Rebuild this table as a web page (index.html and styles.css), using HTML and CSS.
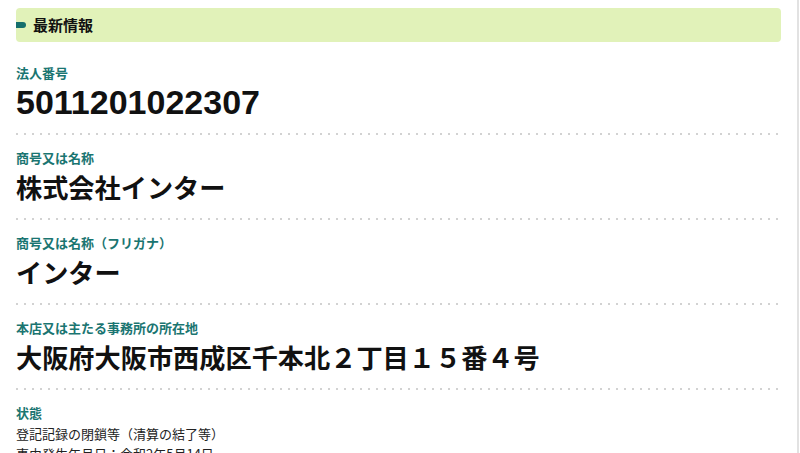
FILE: index.html
```html
<!DOCTYPE html>
<html lang="ja">
<head>
<meta charset="utf-8">
<title>最新情報</title>
<link rel="stylesheet" href="styles.css">
</head>
<body>
<div class="page">
  <h2 class="heading"><span class="heading-mark"></span>最新情報</h2>
  <dl class="info">
    <div class="row">
      <dt class="label">法人番号</dt>
      <dd class="value value-num">5011201022307</dd>
    </div>
    <div class="row">
      <dt class="label">商号又は名称</dt>
      <dd class="value">株式会社インター</dd>
    </div>
    <div class="row">
      <dt class="label">商号又は名称（フリガナ）</dt>
      <dd class="value">インター</dd>
    </div>
    <div class="row">
      <dt class="label">本店又は主たる事務所の所在地</dt>
      <dd class="value">大阪府大阪市西成区千本北２丁目１５番４号</dd>
    </div>
    <div class="row row-last">
      <dt class="label">状態</dt>
      <dd class="text">登記記録の閉鎖等（清算の結了等）<br>事由発生年月日：令和2年5月14日</dd>
    </div>
  </dl>
</div>
</body>
</html>
```
FILE: styles.css
```css
html, body {
  margin: 0;
  padding: 0;
  background: #fff;
  overflow: hidden;
}
body {
  font-family: "Noto Sans CJK JP", "Noto Sans", sans-serif;
  color: #111;
}
.page {
  width: 765px;
  height: 453px;
  padding: 8px 16px 0 16px;
  border-right: 2px solid #e2e2e2;
  box-sizing: content-box;
}
.heading {
  margin: 0 0 8px 0;
  height: 34px;
  display: flex;
  align-items: center;
  gap: 7px;
  background: #e1f2b9;
  border-radius: 4px;
  font-size: 15px;
  font-weight: 700;
  color: #111;
  line-height: 34px;
}
.heading-mark {
  width: 10px;
  height: 6px;
  background: #156f6c;
  border-radius: 0 3px 3px 0;
}
.info {
  margin: 0;
}
.row {
  padding: 14px 0 13px 0;
  background-image: linear-gradient(to right, #d2d2d2 2px, transparent 2px);
  background-size: 8px 2px;
  background-repeat: repeat-x;
  background-position: left bottom;
  border-bottom: 2px solid transparent;
  background-origin: border-box;
}
.row-last {
  background: none;
  border-bottom: none;
}
.label {
  margin: 0 0 2px 0;
  font-size: 13px;
  line-height: 18px;
  font-weight: 700;
  color: #1a7571;
}
.value {
  margin: 0;
  font-size: 26.2px;
  line-height: 36px;
  font-weight: 700;
  color: #111;
  white-space: nowrap;
}
.value-num {
  font-family: "Liberation Sans", Arial, sans-serif;
  font-size: 34px;
}
.text {
  margin: 0;
  font-size: 13px;
  line-height: 20px;
  color: #222;
}
```
